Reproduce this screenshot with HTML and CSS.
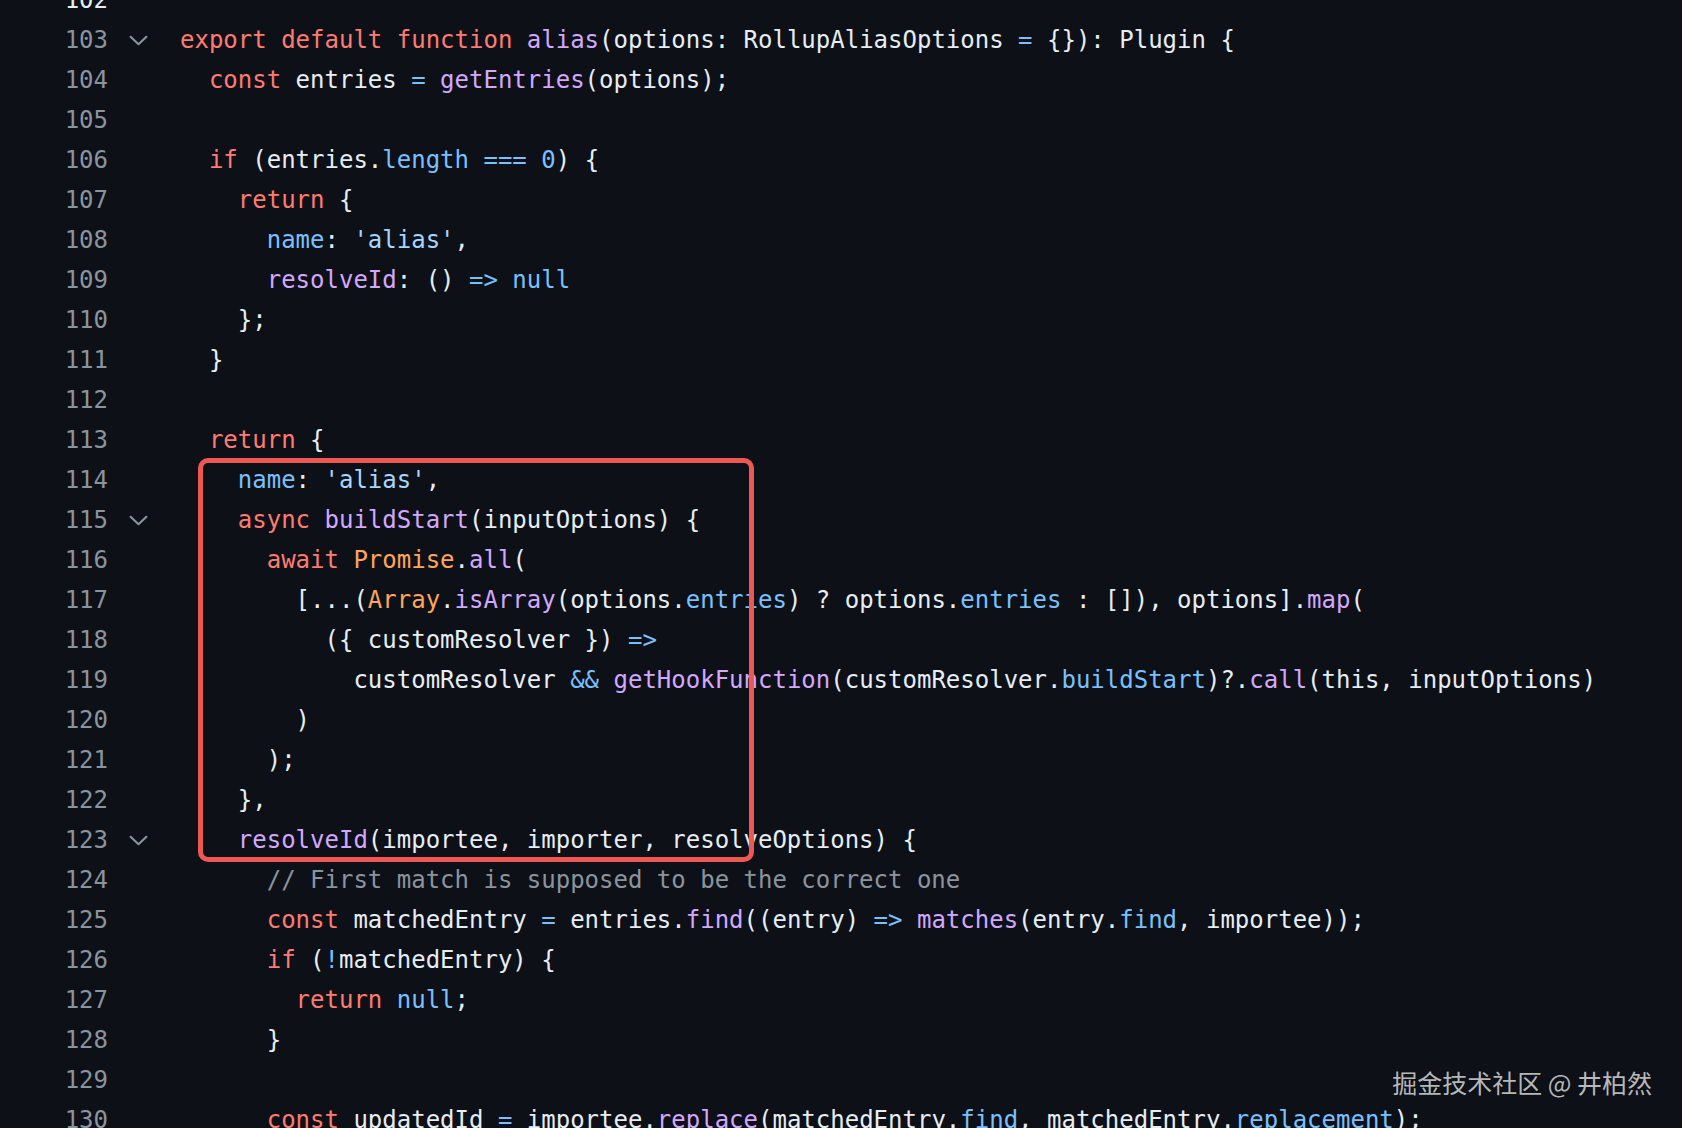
FILE: index.html
```html
<!DOCTYPE html>
<html lang="en">
<head>
<meta charset="utf-8">
<title>alias.ts</title>
<link rel="stylesheet" href="styles.css">
</head>
<body>
<div class="viewer">
  <div class="code">
    <div class="row current"><span class="ln">102</span><span class="fold"></span><span class="src"></span></div>
    <div class="row"><span class="ln">103</span><span class="fold"><svg class="chev" viewBox="0 0 18 10"><path d="M1.5 1.5 L9 8.5 L16.5 1.5"/></svg></span><span class="src"><span class="k">export</span> <span class="k">default</span> <span class="k">function</span> <span class="f">alias</span>(options: RollupAliasOptions <span class="c">=</span> {}): Plugin {</span></div>
    <div class="row"><span class="ln">104</span><span class="fold"></span><span class="src">  <span class="k">const</span> entries <span class="c">=</span> <span class="f">getEntries</span>(options);</span></div>
    <div class="row"><span class="ln">105</span><span class="fold"></span><span class="src"></span></div>
    <div class="row"><span class="ln">106</span><span class="fold"></span><span class="src">  <span class="k">if</span> (entries.<span class="c">length</span> <span class="c">===</span> <span class="c">0</span>) {</span></div>
    <div class="row"><span class="ln">107</span><span class="fold"></span><span class="src">    <span class="k">return</span> {</span></div>
    <div class="row"><span class="ln">108</span><span class="fold"></span><span class="src">      <span class="c">name</span>: <span class="s">'alias'</span>,</span></div>
    <div class="row"><span class="ln">109</span><span class="fold"></span><span class="src">      <span class="f">resolveId</span>: () <span class="c">=&gt;</span> <span class="c">null</span></span></div>
    <div class="row"><span class="ln">110</span><span class="fold"></span><span class="src">    };</span></div>
    <div class="row"><span class="ln">111</span><span class="fold"></span><span class="src">  }</span></div>
    <div class="row"><span class="ln">112</span><span class="fold"></span><span class="src"></span></div>
    <div class="row"><span class="ln">113</span><span class="fold"></span><span class="src">  <span class="k">return</span> {</span></div>
    <div class="row"><span class="ln">114</span><span class="fold"></span><span class="src">    <span class="c">name</span>: <span class="s">'alias'</span>,</span></div>
    <div class="row"><span class="ln">115</span><span class="fold"><svg class="chev" viewBox="0 0 18 10"><path d="M1.5 1.5 L9 8.5 L16.5 1.5"/></svg></span><span class="src">    <span class="k">async</span> <span class="f">buildStart</span>(inputOptions) {</span></div>
    <div class="row"><span class="ln">116</span><span class="fold"></span><span class="src">      <span class="k">await</span> <span class="o">Promise</span>.<span class="f">all</span>(</span></div>
    <div class="row"><span class="ln">117</span><span class="fold"></span><span class="src">        [...(<span class="o">Array</span>.<span class="f">isArray</span>(options.<span class="c">entries</span>) ? options.<span class="c">entries</span> : []), options].<span class="f">map</span>(</span></div>
    <div class="row"><span class="ln">118</span><span class="fold"></span><span class="src">          ({ customResolver }) <span class="c">=&gt;</span></span></div>
    <div class="row"><span class="ln">119</span><span class="fold"></span><span class="src">            customResolver <span class="c">&amp;&amp;</span> <span class="f">getHookFunction</span>(customResolver.<span class="c">buildStart</span>)?.<span class="f">call</span>(this, inputOptions)</span></div>
    <div class="row"><span class="ln">120</span><span class="fold"></span><span class="src">        )</span></div>
    <div class="row"><span class="ln">121</span><span class="fold"></span><span class="src">      );</span></div>
    <div class="row"><span class="ln">122</span><span class="fold"></span><span class="src">    },</span></div>
    <div class="row"><span class="ln">123</span><span class="fold"><svg class="chev" viewBox="0 0 18 10"><path d="M1.5 1.5 L9 8.5 L16.5 1.5"/></svg></span><span class="src">    <span class="f">resolveId</span>(importee, importer, resolveOptions) {</span></div>
    <div class="row"><span class="ln">124</span><span class="fold"></span><span class="src">      <span class="cm">// First match is supposed to be the correct one</span></span></div>
    <div class="row"><span class="ln">125</span><span class="fold"></span><span class="src">      <span class="k">const</span> matchedEntry <span class="c">=</span> entries.<span class="f">find</span>((entry) <span class="c">=&gt;</span> <span class="f">matches</span>(entry.<span class="c">find</span>, importee));</span></div>
    <div class="row"><span class="ln">126</span><span class="fold"></span><span class="src">      <span class="k">if</span> (<span class="c">!</span>matchedEntry) {</span></div>
    <div class="row"><span class="ln">127</span><span class="fold"></span><span class="src">        <span class="k">return</span> <span class="c">null</span>;</span></div>
    <div class="row"><span class="ln">128</span><span class="fold"></span><span class="src">      }</span></div>
    <div class="row"><span class="ln">129</span><span class="fold"></span><span class="src"></span></div>
    <div class="row"><span class="ln">130</span><span class="fold"></span><span class="src">      <span class="k">const</span> updatedId <span class="c">=</span> importee.<span class="f">replace</span>(matchedEntry.<span class="c">find</span>, matchedEntry.<span class="c">replacement</span>);</span></div>
  </div>
  <div class="highlight-box"></div>
  <div class="watermark">掘金技术社区 @ 井柏然</div>
</div>
</body>
</html>
```

FILE: styles.css
```css
html, body {
  margin: 0;
  padding: 0;
  background: #0d1117;
  height: 100%;
  overflow: hidden;
}

.viewer {
  position: relative;
  width: 1682px;
  height: 1128px;
  overflow: hidden;
  background: #0d1117;
  font-family: "DejaVu Sans Mono", "Liberation Mono", monospace;
  font-size: 24px;
  color: #e6edf3;
}

.code {
  margin-top: -20px;
  display: flex;
  flex-direction: column;
}

.row {
  display: flex;
  align-items: center;
  height: 40px;
  line-height: 40px;
}

.ln {
  width: 108px;
  flex: none;
  text-align: right;
  color: #8b949e;
}

.row.current .ln {
  color: #e6edf3;
}

.fold {
  width: 72px;
  flex: none;
  padding-left: 21px;
  box-sizing: border-box;
  display: flex;
  align-items: center;
  height: 40px;
}

.chev {
  width: 19px;
  height: 11px;
  fill: none;
  stroke: #8b949e;
  stroke-width: 2;
  stroke-linecap: round;
  stroke-linejoin: round;
}

.src {
  white-space: pre;
}

.k { color: #ff7b72; }
.f { color: #d2a8ff; }
.c { color: #79c0ff; }
.s { color: #a5d6ff; }
.o { color: #ffa657; }
.cm { color: #8b949e; }

.highlight-box {
  position: absolute;
  left: 198px;
  top: 458px;
  width: 556px;
  height: 404px;
  box-sizing: border-box;
  border: 5px solid #ee5752;
  border-radius: 10px;
  pointer-events: none;
}

.watermark {
  position: absolute;
  right: 30px;
  bottom: 33px;
  font-family: "Noto Sans CJK SC", "Noto Sans", sans-serif;
  font-size: 25px;
  color: rgba(215, 215, 215, 0.85);
  line-height: 1;
}
```
